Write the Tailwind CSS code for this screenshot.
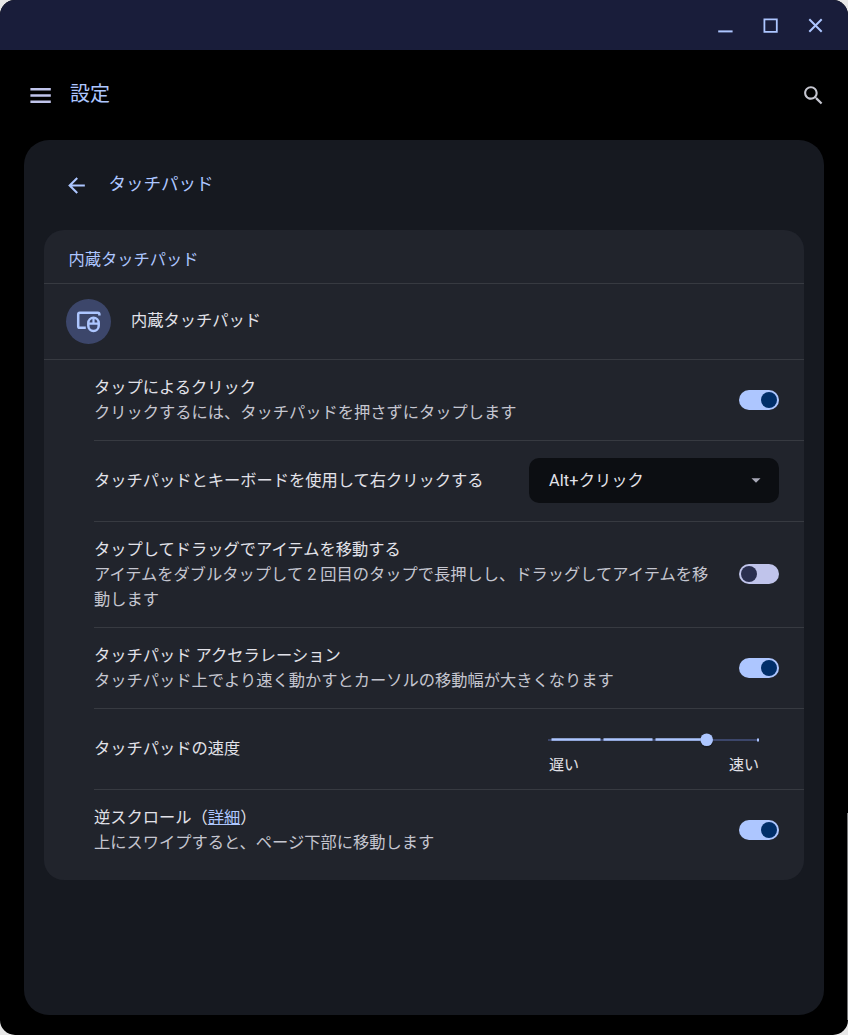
<!DOCTYPE html>
<html lang="ja">
<head>
<meta charset="utf-8">
<title>設定</title>
<script src="https://cdn.jsdelivr.net/npm/@tailwindcss/browser@4"></script>
</head>
<body class="bg-[#e8e8e8] font-['Roboto','Noto_Sans_CJK_JP',sans-serif] text-[16.25px] leading-[25px] text-[#e2e2e9]">
<div class="relative flex h-[1035px] w-[848px] flex-col overflow-hidden rounded-[15px] bg-black">
  <div class="flex h-[50px] shrink-0 items-center justify-end gap-[25px] bg-[#191d3a] pr-[23px] text-[#adc6ff]">
    <svg class="size-5" viewBox="0 0 20 20"><path d="M3.2 16.4h14.4" stroke="currentColor" stroke-width="2"/></svg>
    <svg class="size-5" viewBox="0 0 20 20"><path d="M4.4 4.4h12.4v12.4H4.4z" fill="none" stroke="currentColor" stroke-width="1.8"/></svg>
    <svg class="size-5" viewBox="0 0 20 20"><path d="M4.3 4.3 16.7 16.7M16.7 4.3 4.3 16.7" stroke="currentColor" stroke-width="2"/></svg>
  </div>
  <header class="flex h-[90px] shrink-0 items-center pr-[22.5px] pl-[28px]">
    <svg class="h-[25px] w-[25px] text-[#c0c4eb]" viewBox="0 0 25 25"><path d="M2.4 6.2h20.4M2.4 12.5h20.4M2.4 18.8h20.4" stroke="currentColor" stroke-width="2.4"/></svg>
    <h1 class="-mt-[3px] ml-[17px] text-[20px] leading-[30px] text-[#adc6ff]">設定</h1>
    <svg class="ml-auto size-[25px] text-[#c5c6d0]" viewBox="0 0 24 24" fill="currentColor"><path d="M15.5 14h-.79l-.28-.27C15.41 12.59 16 11.11 16 9.5 16 5.91 13.09 3 9.5 3S3 5.91 3 9.5 5.91 16 9.5 16c1.61 0 3.09-.59 4.23-1.57l.27.28v.79l5 4.99L20.49 19l-4.99-5zm-6 0C7.01 14 5 11.99 5 9.5S7.01 5 9.5 5 14 7.01 14 9.5 11.99 14 9.5 14z"/></svg>
  </header>
  <main class="mx-6 h-[875px] shrink-0 rounded-[25px] bg-[#161920] px-5">
    <div class="flex h-[90px] items-center pl-5 text-[#adc6ff]">
      <svg class="size-[25px]" viewBox="0 0 24 24" fill="currentColor"><path d="M20 11H7.83l5.59-5.59L12 4l-8 8 8 8 1.41-1.41L7.83 13H20v-2z"/></svg>
      <h2 class="-mt-[1px] ml-[19.5px] text-[17.5px]">タッチパッド</h2>
    </div>
    <section class="h-[650px] rounded-[20px] bg-[#21242c]">
      <h3 class="flex h-[54px] items-center border-b border-[#373a41] pt-[5px] pl-[24.5px] text-[#adc6ff]">内蔵タッチパッド</h3>
      <div class="flex h-[76px] items-center gap-5 border-b border-[#373a41] pl-[22px]">
        <div class="flex size-[45px] items-center justify-center rounded-full bg-[#3c466a] text-[#adc6ff]">
          <svg class="size-[25px]" viewBox="0 0 25 25" fill="none" stroke="currentColor" stroke-width="2.5"><path d="M23.4 6.6V5.4Q23.4 3.7 21.8 3.7H3.7Q2.2 3.7 2.2 5.4V17.2Q2.2 18.8 3.7 18.8H9.8"/><rect x="12.3" y="8.8" width="10.4" height="13.2" rx="5.2"/><path stroke-width="2.2" d="M12.3 14.6H22.7M17.5 8.8V14.6"/></svg>
        </div>
        <span class="-mt-[2px]">内蔵タッチパッド</span>
      </div>
      <div class="ml-[50px]">
        <div class="flex h-[81px] items-center justify-between border-b border-[#373a41] pr-[25px]">
          <div><p>タップによるクリック</p><p class="text-[#c5c6d0]">クリックするには、タッチパッドを押さずにタップします</p></div>
          <div class="flex h-5 w-10 items-center justify-end rounded-full bg-[#adc6ff] px-[2.3px]"><div class="size-[15.5px] rounded-full bg-[#002e69]"></div></div>
        </div>
        <div class="flex h-[81px] items-center justify-between border-b border-[#373a41] pr-[25px]">
          <p class="-mt-[2px]">タッチパッドとキーボードを使用して右クリックする</p>
          <div class="-mt-[2px] flex h-[45px] w-[250px] items-center justify-between rounded-[10px] bg-[#0c0e12] pr-[18.5px] pl-5">
            <span><span class="tracking-[.15px]">Alt+</span>クリック</span>
            <svg class="h-[5px] w-[10px]" viewBox="0 0 10 5"><path d="M.5.3h9L5 4.8z" fill="#a9a9b8"/></svg>
          </div>
        </div>
        <div class="flex h-[106px] items-center justify-between border-b border-[#373a41] pr-[25px]">
          <div class="whitespace-nowrap"><p>タップしてドラッグでアイテムを移動する</p><p class="text-[#c5c6d0]">アイテムをダブルタップして 2 回目のタップで長押しし、ドラッグしてアイテムを移<br>動します</p></div>
          <div class="-mt-[1px] flex h-5 w-10 shrink-0 items-center rounded-full bg-[#c0c4eb] px-[2.3px]"><div class="size-[15.5px] rounded-full bg-[#2a2f4f]"></div></div>
        </div>
        <div class="flex h-[81px] items-center justify-between border-b border-[#373a41] pr-[25px]">
          <div><p>タッチパッド アクセラレーション</p><p class="text-[#c5c6d0]">タッチパッド上でより速く動かすとカーソルの移動幅が大きくなります</p></div>
          <div class="flex h-5 w-10 items-center justify-end rounded-full bg-[#adc6ff] px-[2.3px]"><div class="size-[15.5px] rounded-full bg-[#002e69]"></div></div>
        </div>
        <div class="flex h-[81px] items-center justify-between border-b border-[#373a41] pr-[44px]">
          <p class="-mt-[2px]">タッチパッドの速度</p>
          <div class="w-[212px] pt-[9px]">
            <svg class="block h-[20px] w-[212px] overflow-visible" viewBox="0 0 212 20">
              <path d="M0 10h211" stroke="#3c466a" stroke-width="2"/>
              <path d="M3.5 9.5h49M55.5 9.5h49M107.5 9.5h50" stroke="#adc6ff" stroke-width="2.3"/>
              <path d="M209 8.5h2v3h-2z" fill="#adc6ff"/>
              <circle cx="158.7" cy="11.3" r="6.5" fill="#000" opacity=".25"/>
              <circle cx="158.7" cy="9.7" r="6.3" fill="#adc6ff"/>
            </svg>
            <div class="mt-[3px] flex justify-between pr-[1px] pl-[1px] text-[15px]"><span>遅い</span><span>速い</span></div>
          </div>
        </div>
        <div class="flex h-[80px] items-center justify-between pr-[25px]">
          <div><p>逆スクロール（<a class="text-[#adc6ff] underline">詳細</a>）</p><p class="text-[#c5c6d0]">上にスワイプすると、ページ下部に移動します</p></div>
          <div class="flex h-5 w-10 items-center justify-end rounded-full bg-[#adc6ff] px-[2.3px]"><div class="size-[15.5px] rounded-full bg-[#002e69]"></div></div>
        </div>
      </div>
    </section>
  </main>
  <div class="absolute right-0 bottom-[15px] h-[207px] w-px bg-[#77787a]"></div>
</div>
</body>
</html>
